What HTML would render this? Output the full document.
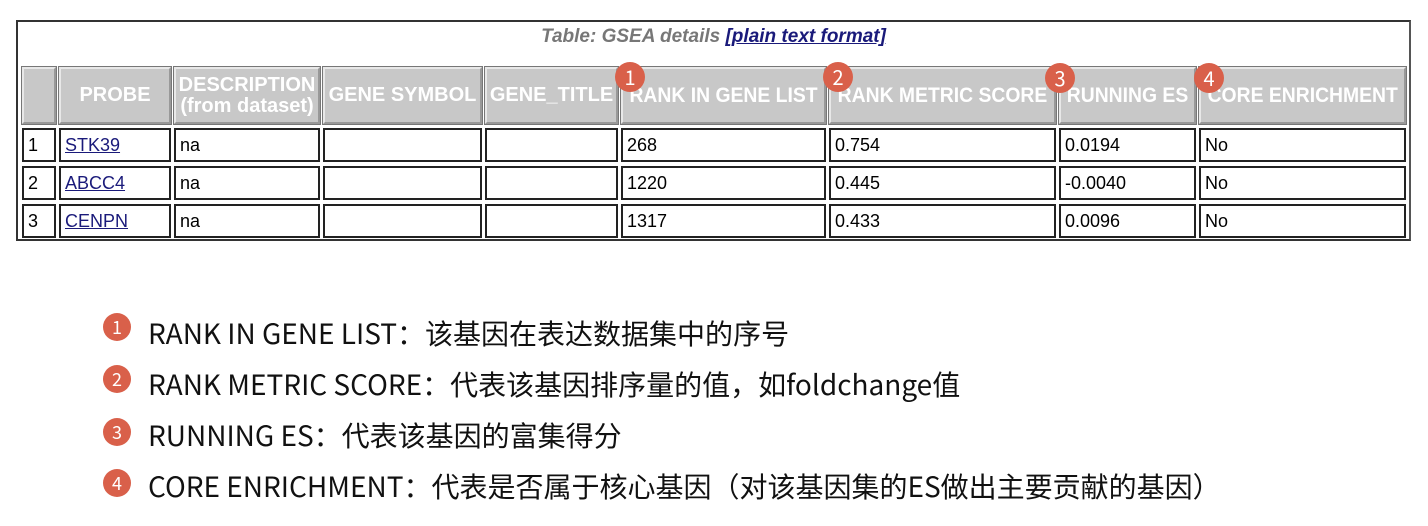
<!DOCTYPE html>
<html><head><meta charset="utf-8"><style>
body{margin:0;width:1428px;height:526px;background:#fff;position:relative;overflow:hidden;font-family:"Liberation Sans",Arial,sans-serif}
.outer{position:absolute;left:16px;top:20px;width:1391px;height:217px;border:2px solid #333;border-right-color:#555}
.c{position:absolute;box-sizing:border-box;border:2px solid #222;background:#fff;font-size:18px;color:#000;padding-left:4px;line-height:30px;white-space:nowrap}
.h{position:absolute;box-sizing:border-box;background:#c8c8c8;border:2px solid #999;border-top-color:#e8e8e8;border-left-color:#e8e8e8;outline:1px solid #777;color:#fff;font-weight:bold;font-size:20px;display:flex;align-items:center;justify-content:center;text-align:center;line-height:21px;white-space:nowrap;overflow:hidden}
.h span{display:inline-block;font-size:21.5px;transform:scaleX(.9)}
a{color:#1a1a7a}
.b{position:absolute;width:30px;height:30px;border-radius:50%;background:#d9604a;color:#fff;font-family:"Noto Sans CJK SC",sans-serif;font-size:20px;line-height:30px;text-align:center}
.lb{position:absolute;width:28px;height:28px;border-radius:50%;background:#d9604a;color:#fff;font-family:"Noto Sans CJK SC",sans-serif;font-size:18px;line-height:28px;text-align:center}
.lt{position:absolute;left:148px;font-family:"Noto Sans CJK SC",sans-serif;font-size:28px;color:#111;white-space:nowrap;line-height:32px}
</style></head><body>
<div class="outer"></div>
<div style="position:absolute;left:16px;top:26px;width:1395px;text-align:center;font-size:19px;font-style:italic;font-weight:bold;color:#777">Table: GSEA details <a href="#" style="color:#1a1a7a">[plain text format]</a></div>

<div class="h" style="left:22px;top:67px;width:34px;height:57px"></div>
<div class="h" style="left:59px;top:67px;width:112px;height:57px">PROBE</div>
<div class="h" style="left:174px;top:67px;width:146px;height:57px">DESCRIPTION<br>(from dataset)</div>
<div class="h" style="left:323px;top:67px;width:159px;height:57px">GENE SYMBOL</div>
<div class="h" style="left:485px;top:67px;width:133px;height:57px">GENE_TITLE</div>
<div class="h" style="left:621px;top:67px;width:205px;height:57px"><span>RANK IN GENE LIST</span></div>
<div class="h" style="left:829px;top:67px;width:227px;height:57px"><span>RANK METRIC SCORE</span></div>
<div class="h" style="left:1059px;top:67px;width:137px;height:57px"><span>RUNNING ES</span></div>
<div class="h" style="left:1199px;top:67px;width:207px;height:57px"><span>CORE ENRICHMENT</span></div>

<div class="c" style="left:22px;top:128px;width:34px;height:34px">1</div>
<div class="c" style="left:59px;top:128px;width:112px;height:34px"><a href="#">STK39</a></div>
<div class="c" style="left:174px;top:128px;width:146px;height:34px">na</div>
<div class="c" style="left:323px;top:128px;width:159px;height:34px"></div>
<div class="c" style="left:485px;top:128px;width:133px;height:34px"></div>
<div class="c" style="left:621px;top:128px;width:205px;height:34px">268</div>
<div class="c" style="left:829px;top:128px;width:227px;height:34px">0.754</div>
<div class="c" style="left:1059px;top:128px;width:137px;height:34px">0.0194</div>
<div class="c" style="left:1199px;top:128px;width:207px;height:34px">No</div>

<div class="c" style="left:22px;top:166px;width:34px;height:34px">2</div>
<div class="c" style="left:59px;top:166px;width:112px;height:34px"><a href="#">ABCC4</a></div>
<div class="c" style="left:174px;top:166px;width:146px;height:34px">na</div>
<div class="c" style="left:323px;top:166px;width:159px;height:34px"></div>
<div class="c" style="left:485px;top:166px;width:133px;height:34px"></div>
<div class="c" style="left:621px;top:166px;width:205px;height:34px">1220</div>
<div class="c" style="left:829px;top:166px;width:227px;height:34px">0.445</div>
<div class="c" style="left:1059px;top:166px;width:137px;height:34px">-0.0040</div>
<div class="c" style="left:1199px;top:166px;width:207px;height:34px">No</div>

<div class="c" style="left:22px;top:204px;width:34px;height:34px">3</div>
<div class="c" style="left:59px;top:204px;width:112px;height:34px"><a href="#">CENPN</a></div>
<div class="c" style="left:174px;top:204px;width:146px;height:34px">na</div>
<div class="c" style="left:323px;top:204px;width:159px;height:34px"></div>
<div class="c" style="left:485px;top:204px;width:133px;height:34px"></div>
<div class="c" style="left:621px;top:204px;width:205px;height:34px">1317</div>
<div class="c" style="left:829px;top:204px;width:227px;height:34px">0.433</div>
<div class="c" style="left:1059px;top:204px;width:137px;height:34px">0.0096</div>
<div class="c" style="left:1199px;top:204px;width:207px;height:34px">No</div>

<div class="b" style="left:615px;top:62px">1</div>
<div class="b" style="left:823px;top:62px">2</div>
<div class="b" style="left:1045px;top:63px">3</div>
<div class="b" style="left:1194px;top:63px">4</div>

<div class="lb" style="left:103px;top:313px">1</div>
<div class="lt" style="top:317px">RANK IN GENE LIST：该基因在表达数据集中的序号</div>
<div class="lb" style="left:103px;top:365px">2</div>
<div class="lt" style="top:368px">RANK METRIC SCORE：代表该基因排序量的值，如foldchange值</div>
<div class="lb" style="left:103px;top:418px">3</div>
<div class="lt" style="top:419px">RUNNING ES：代表该基因的富集得分</div>
<div class="lb" style="left:103px;top:469px">4</div>
<div class="lt" style="top:470px">CORE ENRICHMENT：代表是否属于核心基因（对该基因集的ES做出主要贡献的基因）</div>
</body></html>
